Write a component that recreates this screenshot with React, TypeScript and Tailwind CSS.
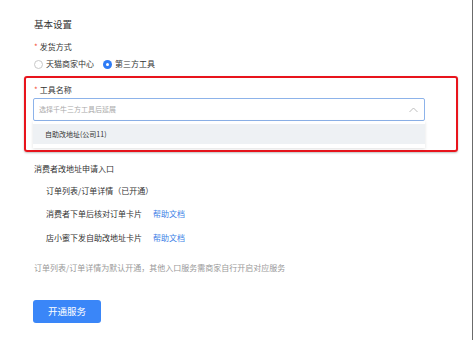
import React from "react";

const font = { fontFamily: '"Noto Sans CJK SC", "Noto Sans", sans-serif' };

export default function App() {
  return (
    <div className="w-[473px] h-[340px] bg-white flex" style={font}>
      <div className="flex-1 flex flex-col pl-[34px] border-r border-[#6b6b6b]">
        <div className="mt-[17px] h-[14px] flex items-center text-[9.5px] text-[#333]">基本设置</div>
        <div className="mt-[10px] h-[12px] flex items-center text-[8px] text-[#333]">
          <span className="text-[#f5503a] mr-[2px]">*</span>发货方式
        </div>
        <div className="mt-[5px] h-[12px] flex items-center text-[8px] text-[#333] whitespace-nowrap">
          <span className="w-[9px] h-[9px] rounded-full border border-[#c8c8c8] bg-white mr-[3px]" />
          <span>天猫商家中心</span>
          <span className="ml-[9px] w-[9px] h-[9px] rounded-full bg-[#2f7cf6] mr-[3px] flex items-center justify-center">
            <span className="w-[3px] h-[3px] rounded-full bg-white" />
          </span>
          <span>第三方工具</span>
        </div>
        <div className="mt-[6px] -ml-[10px] w-[434px] h-[76px] border-2 border-[#e8141c] rounded-[3px] shadow-[0_1px_2px_rgba(0,0,0,0.25)] pl-[7px] pr-[31px] flex flex-col">
          <div className="mt-[6px] h-[12px] flex items-center text-[8px] text-[#333] pl-[1px]">
            <span className="text-[#f5503a] mr-[2px]">*</span>工具名称
          </div>
          <div className="mt-[2px] h-[23px] border border-[#8db3ea] rounded-[2px] flex items-center justify-between pl-[5px] pr-[6px]">
            <span className="text-[7px] text-[#aaa]">选择千牛三方工具后延展</span>
            <svg width="9" height="6" viewBox="0 0 9 6" fill="none">
              <path d="M0.5 5 L4.5 1 L8.5 5" stroke="#b5b5b5" strokeWidth="0.9" />
            </svg>
          </div>
          <div className="h-[27px] bg-white shadow-[0_1px_3px_rgba(0,0,0,0.12)] pt-[3px]">
            <div className="h-[20px] bg-[#eef1f4] flex items-center pl-[12px] text-[7px] text-[#333]">自助改地址(公司11)</div>
          </div>
        </div>
        <div className="mt-[11px] h-[12px] flex items-center text-[8px] text-[#333]">消费者改地址申请入口</div>
        <div className="mt-[10px] h-[12px] flex items-center text-[8px] text-[#333] pl-[12px] whitespace-nowrap">订单列表/订单详情（已开通）</div>
        <div className="mt-[11px] h-[12px] flex items-center text-[8px] text-[#333] pl-[12px] whitespace-nowrap">
          <span className="w-[107px] shrink-0">消费者下单后核对订单卡片</span>
          <span className="text-[#3c7fe6]">帮助文档</span>
        </div>
        <div className="mt-[12px] h-[12px] flex items-center text-[8px] text-[#333] pl-[12px] whitespace-nowrap">
          <span className="w-[107px] shrink-0">店小蜜下发自助改地址卡片</span>
          <span className="text-[#3c7fe6]">帮助文档</span>
        </div>
        <div className="mt-[18px] h-[12px] flex items-center text-[8px] text-[#999] whitespace-nowrap">订单列表/订单详情为默认开通，其他入口服务需商家自行开启对应服务</div>
        <div className="mt-[26px] -ml-px w-[68px] h-[23px] rounded-[3px] bg-[#3a86f8] text-white text-[9.5px] flex items-center justify-center">开通服务</div>
      </div>
    </div>
  );
}
